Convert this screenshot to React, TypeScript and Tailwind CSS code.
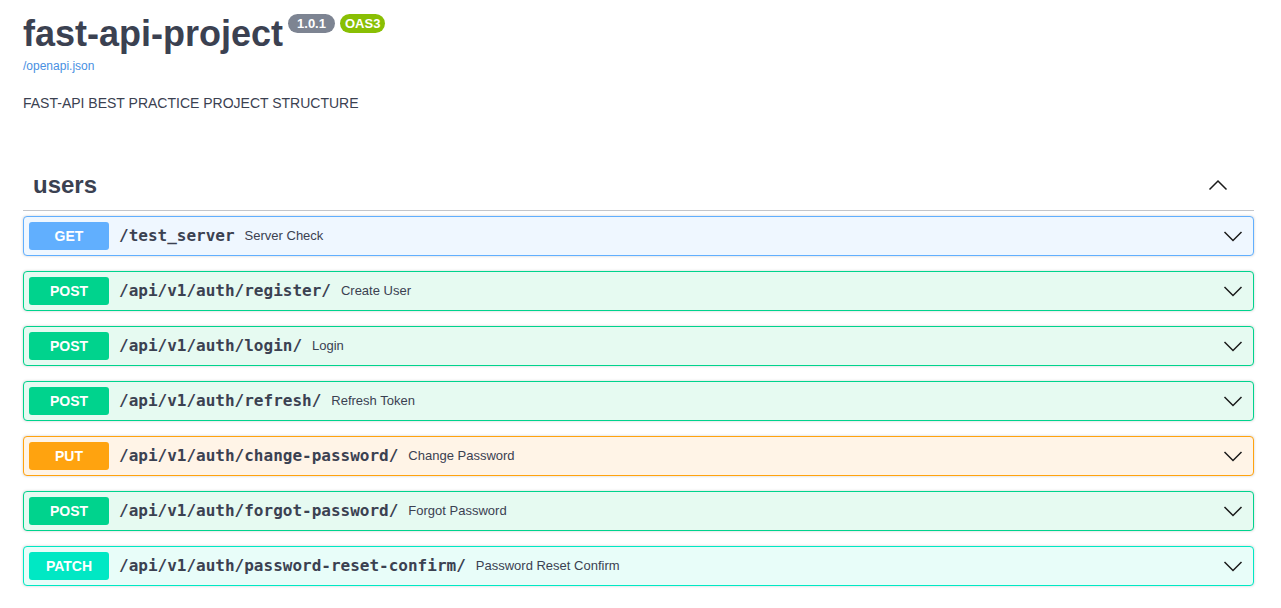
import React from 'react';

type Method = 'GET' | 'POST' | 'PUT' | 'PATCH';

interface Endpoint {
  method: Method;
  path: string;
  summary: string;
}

const endpoints: Endpoint[] = [
  { method: 'GET', path: '/test_server', summary: 'Server Check' },
  { method: 'POST', path: '/api/v1/auth/register/', summary: 'Create User' },
  { method: 'POST', path: '/api/v1/auth/login/', summary: 'Login' },
  { method: 'POST', path: '/api/v1/auth/refresh/', summary: 'Refresh Token' },
  { method: 'PUT', path: '/api/v1/auth/change-password/', summary: 'Change Password' },
  { method: 'POST', path: '/api/v1/auth/forgot-password/', summary: 'Forgot Password' },
  { method: 'PATCH', path: '/api/v1/auth/password-reset-confirm/', summary: 'Password Reset Confirm' },
];

// full class strings per method so tailwind picks them up
const methodStyles: Record<Method, { row: string; badge: string }> = {
  GET: { row: 'border-[#61affe] bg-[#eff7ff]', badge: 'bg-[#61affe]' },
  POST: { row: 'border-[#00d38d] bg-[#e6faf1]', badge: 'bg-[#00d38d]' },
  PUT: { row: 'border-[#ffa30f] bg-[#fff4e7]', badge: 'bg-[#ffa30f]' },
  PATCH: { row: 'border-[#00e8c4] bg-[#e8fdf9]', badge: 'bg-[#00e8c4]' },
};

const Chevron: React.FC<{ up?: boolean }> = ({ up }) => (
  <svg width="20" height="20" viewBox="0 0 20 20" className="shrink-0">
    <polyline
      points={up ? '1.5,14.5 10,6 18.5,14.5' : '1.5,6 10,14.5 18.5,6'}
      fill="none"
      stroke="#1a1a1a"
      strokeWidth="1.5"
    />
  </svg>
);

const EndpointRow: React.FC<{ ep: Endpoint }> = ({ ep }) => {
  const s = methodStyles[ep.method];
  return (
    <div className={`mb-[15px] rounded-[4px] border shadow-[0_0_3px_rgba(0,0,0,0.19)] ${s.row}`}>
      <div className="flex items-center p-[5px]">
        <span className={`w-[80px] shrink-0 rounded-[3px] py-[6px] text-center text-[14px] leading-[16px] font-bold text-white ${s.badge}`}>
          {ep.method}
        </span>
        <span className="px-[10px] font-['DejaVu_Sans_Mono',monospace] text-[16px] font-bold text-[#3b4151]">
          {ep.path}
        </span>
        <span className="flex-1 text-[13px] text-[#3b4151]">{ep.summary}</span>
        <span className="mr-[5px]">
          <Chevron />
        </span>
      </div>
    </div>
  );
};

const App: React.FC = () => {
  return (
    <div className="min-h-screen bg-white pl-[23px] pr-[27px] font-['Liberation_Sans',Arial,sans-serif] text-[#3b4151]">
      {/* Info */}
      <div className="pt-[14px]">
        <div className="flex items-start">
          <h2 className="mt-[1.5px] text-[36px] leading-[36px] font-bold">fast-api-project</h2>
          <span className="ml-[5px] rounded-full bg-[#7d8492] px-[9px] py-[2px] text-[13px] leading-[15px] font-bold text-white">
            1.0.1
          </span>
          <span className="ml-[5px] rounded-full bg-[#89bf04] px-[5px] py-[2px] text-[13px] leading-[15px] font-bold text-white">
            OAS3
          </span>
        </div>
        <a href="#" className="mt-[7px] block text-[12px] leading-[14px] text-[#4990e2]">
          /openapi.json
        </a>
        <p className="mt-[22px] text-[14px] leading-[16px]">FAST-API BEST PRACTICE PROJECT STRUCTURE</p>
      </div>

      {/* Tag section */}
      <div className="mt-[50px]">
        <div className="mb-[5px] flex items-center justify-between border-b border-[rgba(59,65,81,0.3)] pt-[10px] pb-[11px] pl-[10px]">
          <h3 className="text-[24px] leading-[28px] font-bold">users</h3>
          <span className="mr-[26px]">
            <Chevron up />
          </span>
        </div>
        {endpoints.map((ep) => (
          <EndpointRow key={ep.path} ep={ep} />
        ))}
      </div>
    </div>
  );
};

export default App;
